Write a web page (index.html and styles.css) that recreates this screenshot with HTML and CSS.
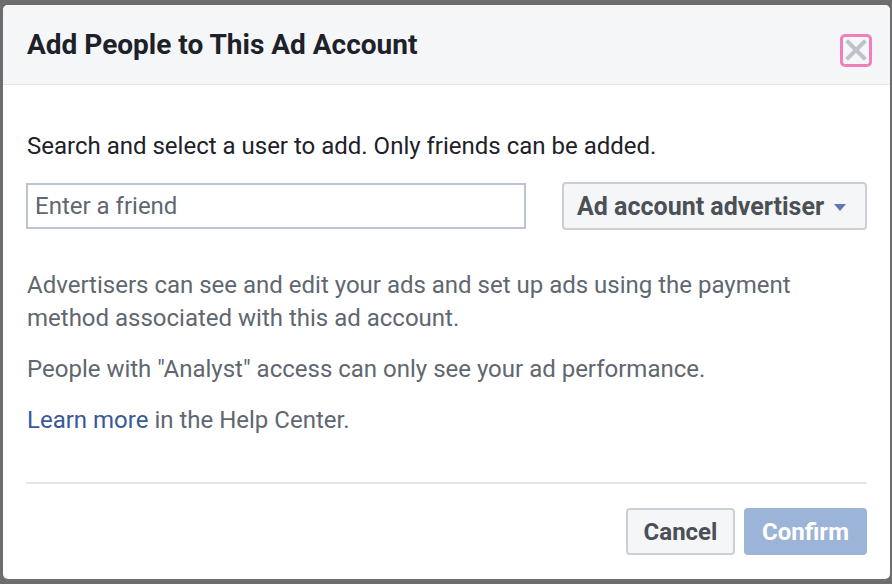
FILE: index.html
```html
<!DOCTYPE html>
<html lang="en">
<head>
    <meta charset="UTF-8">
    <meta name="viewport" content="width=device-width, initial-scale=1.0">
    <title>Add People to This Ad Account</title>
    <link rel="stylesheet" href="styles.css">
</head>
<body>
    <div class="dialog">
        <div class="dialog-header">
            <h1 class="dialog-title">Add People to This Ad Account</h1>
            <button class="close-btn" aria-label="Close">
                <svg width="22" height="22" viewBox="0 0 22 22">
                    <path d="M3 3 L19 19 M19 3 L3 19" stroke="#bec2c9" stroke-width="4" stroke-linecap="square"/>
                </svg>
            </button>
        </div>

        <div class="dialog-body">
            <p class="intro">Search and select a user to add. Only friends can be added.</p>

            <div class="picker-row">
                <input type="text" class="friend-input" placeholder="Enter a friend">
                <button class="role-select">
                    Ad account advertiser
                    <span class="caret"></span>
                </button>
            </div>

            <div class="info">
                <p>Advertisers can see and edit your ads and set up ads using the payment method associated with this ad account.</p>
                <p>People with "Analyst" access can only see your ad performance.</p>
                <p><a href="#" class="help-link">Learn more</a> in the Help Center.</p>
            </div>
        </div>

        <div class="dialog-footer">
            <button class="btn btn-cancel">Cancel</button>
            <button class="btn btn-confirm" disabled>Confirm</button>
        </div>
    </div>
</body>
</html>
```

FILE: styles.css
```css
*
{
    box-sizing: border-box;
}

body
{
    margin: 0;
    padding: 5px 2px 5px 3px;
    background-color: #6d6d6d;
    font-family: Roboto, "Liberation Sans", Arial, sans-serif;
}

.dialog
{
    width: 887px;
    height: 574px;
    background-color: #fff;
    border-radius: 5px;
    overflow: hidden;
    display: flex;
    flex-direction: column;
}

.dialog-header
{
    height: 80px;
    flex-shrink: 0;
    background-color: #f5f6f7;
    border-bottom: 1px solid #e5e5e5;
    display: flex;
    align-items: center;
    justify-content: space-between;
    padding: 0 18px 0 24px;
}

.dialog-title
{
    margin: 0;
    font-size: 28px;
    font-weight: 700;
    color: #1d2129;
}

.close-btn
{
    width: 32px;
    height: 33px;
    padding: 0;
    margin-top: 11px;
    background: transparent;
    border: 3px solid #f27fb8;
    border-radius: 5px;
    display: flex;
    align-items: center;
    justify-content: center;
}

.dialog-body
{
    flex: 1;
    padding: 45px 23px 0 23px;
}

.intro
{
    margin: 0;
    font-size: 24px;
    line-height: 32px;
    color: #1d2129;
    padding-left: 1px;
}

.picker-row
{
    margin-top: 20px;
    display: flex;
    align-items: center;
    justify-content: space-between;
}

.friend-input
{
    width: 500px;
    height: 46px;
    border: 2px solid #bec3d0;
    padding: 0 7px;
    font-family: inherit;
    font-size: 24px;
    color: #1d2129;
    outline: none;
}

.friend-input::placeholder
{
    color: #606770;
}

.role-select
{
    height: 48px;
    width: 305px;
    background-color: #f5f6f7;
    border: 2px solid #ccd0d5;
    border-radius: 4px;
    padding: 0 12px 0 13px;
    display: flex;
    align-items: center;
    gap: 10px;
    font-family: inherit;
    font-size: 25px;
    font-weight: 700;
    color: #4b4f56;
}

.caret
{
    width: 0;
    height: 0;
    margin-top: 2px;
    border-left: 6px solid transparent;
    border-right: 6px solid transparent;
    border-top: 7px solid #6378ab;
}

.info
{
    margin-top: 39px;
    padding-left: 1px;
    padding-bottom: 45px;
    border-bottom: 2px solid #e4e6e9;
}

.info p
{
    margin: 0 0 18px 0;
    font-size: 24px;
    line-height: 33px;
    color: #606770;
}

.info p:last-child
{
    margin-bottom: 0;
}

.help-link
{
    color: #385898;
    text-decoration: none;
}

.dialog-footer
{
    display: flex;
    justify-content: flex-end;
    gap: 9px;
    padding: 0 23px 24px 23px;
}

.btn
{
    height: 47px;
    padding: 0;
    border-radius: 4px;
    font-family: inherit;
    font-size: 24px;
    font-weight: 700;
}

.btn-cancel
{
    width: 109px;
    background-color: #f5f6f7;
    border: 2px solid #ccd0d5;
    color: #4b4f56;
}

.btn-confirm
{
    width: 123px;
    background-color: #9cb4d8;
    border: 2px solid #9cb4d8;
    color: #fff;
}
```
